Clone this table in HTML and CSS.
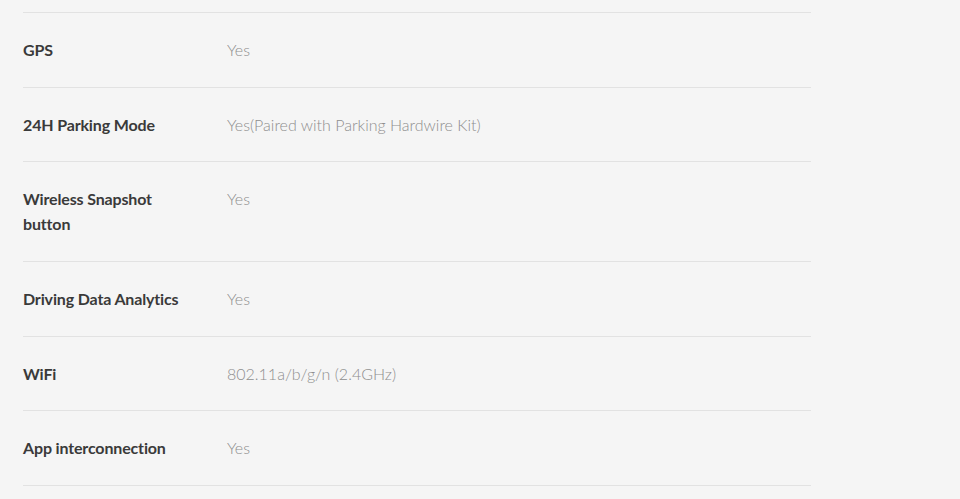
FILE: index.html
```
<!DOCTYPE html>
<html lang="en">
<head>
    <meta charset="UTF-8">
    <meta name="viewport" content="width=device-width, initial-scale=1.0">
    <title>Specifications</title>
    <link rel="stylesheet" href="styles.css">
</head>
<body>
    <div class="specs">
        <div class="spec-row">
            <div class="spec-name">GPS</div>
            <div class="spec-value">Yes</div>
        </div>
        <div class="spec-row">
            <div class="spec-name">24H Parking Mode</div>
            <div class="spec-value">Yes(Paired with Parking Hardwire Kit)</div>
        </div>
        <div class="spec-row">
            <div class="spec-name">Wireless Snapshot button</div>
            <div class="spec-value">Yes</div>
        </div>
        <div class="spec-row">
            <div class="spec-name">Driving Data Analytics</div>
            <div class="spec-value">Yes</div>
        </div>
        <div class="spec-row">
            <div class="spec-name">WiFi</div>
            <div class="spec-value">802.11a/b/g/n (2.4GHz)</div>
        </div>
        <div class="spec-row">
            <div class="spec-name">App interconnection</div>
            <div class="spec-value">Yes</div>
        </div>
    </div>
</body>
</html>
```
FILE: styles.css
```
body {
    margin: 0;
    padding: 12px 0 0 23px;
    background-color: #f5f5f5;
    font-family: Lato, "Noto Sans", sans-serif;
}
.specs {
    width: 788px;
    border-top: 1px solid #e2e2e2;
}
.spec-row {
    display: grid;
    grid-template-columns: 162px 1fr;
    column-gap: 42px;
    padding: 24px 0 24.7px;
    border-bottom: 1px solid #e2e2e2;
    line-height: 25px;
}
.spec-name {
    font-size: 16px;
    font-weight: bold;
    color: #3a3a3a;
    letter-spacing: -0.15px;
}
.spec-value {
    font-size: 16px;
    font-weight: 300;
    color: #8e8e8e;
}
```
